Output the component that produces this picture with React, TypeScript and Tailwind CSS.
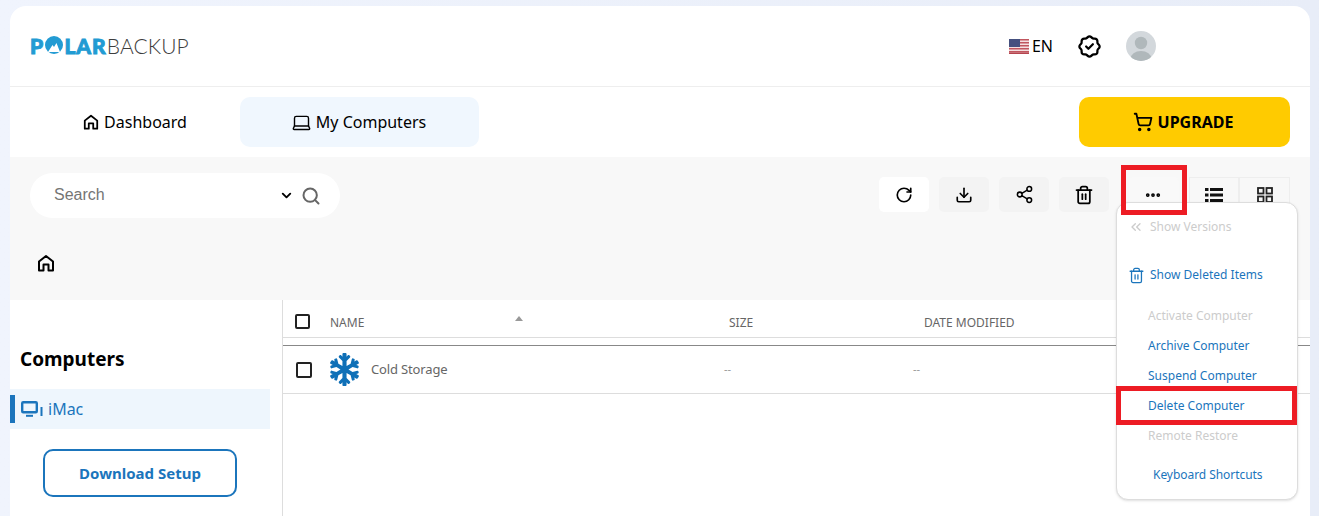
import { ChevronDown, ChevronsLeft, Download, Laptop, MoreHorizontal, RotateCw, Search, Share2, ShoppingCart, Trash2 } from "lucide-react";
import { FaSnowflake } from "react-icons/fa";
import { TbRosetteDiscountCheck } from "react-icons/tb";

function HomeIcon({ className }: { className?: string }) {
  return (
    <svg viewBox="0 0 18 18" className={className} fill="none" stroke="currentColor" strokeWidth="2">
      <path d="M2 16.5V7.5L9 2l7 5.5v9h-4.5v-6h-5v6H2z" strokeLinejoin="round" />
    </svg>
  );
}

function Flag() {
  return (
    <svg viewBox="0 0 20 15" className="w-5 h-[15px]">
      <rect width="20" height="15" fill="#f4dfe0" />
      {[0, 3, 6, 9, 12].map((y) => (
        <rect key={y} y={y} width="20" height="1.5" fill="#c0565f" />
      ))}
      <rect y="13.5" width="20" height="1.5" fill="#b5444e" />
      <rect width="11" height="8" fill="#45507f" />
    </svg>
  );
}

function Avatar() {
  return (
    <svg viewBox="0 0 30 30" className="w-[30px] h-[30px] rounded-full">
      <rect width="30" height="30" fill="#d3d8dc" />
      <circle cx="15" cy="12" r="6.2" fill="#b0b8bb" />
      <ellipse cx="15" cy="28" rx="10.5" ry="8" fill="#b0b8bb" />
    </svg>
  );
}

function Logo() {
  return (
    <div className="flex items-center leading-none font-['Lato',sans-serif] text-[21px] -mt-[2px]">
      <span className="font-black text-[#229bd3] tracking-[1.2px] [-webkit-text-stroke:0.9px_#229bd3]">P</span>
      <svg viewBox="0 0 18 18" className="w-[18px] h-[18px] mx-[1px]">
        <circle cx="9" cy="9" r="9" fill="#229bd3" />
        <path d="M3 16l4.5-7 1.5 2 2.5-4 3.5 9z" fill="#fff" />
      </svg>
      <span className="font-black text-[#229bd3] tracking-[1px] [-webkit-text-stroke:0.9px_#229bd3]">LAR</span>
      <span className="font-light text-[#3d3d3d] tracking-[0.1px]">BACKUP</span>
    </div>
  );
}

function ImacIcon() {
  return (
    <svg viewBox="0 0 22 18" className="w-[22px] h-[18px]" fill="none" stroke="#1b75bc">
      <rect x="1.2" y="2.2" width="14.6" height="10" rx="1" strokeWidth="2.4" />
      <path d="M5 15.8h7" strokeWidth="2" />
      <path d="M20.5 7v9" strokeWidth="2" />
    </svg>
  );
}

function ListIcon() {
  return (
    <svg viewBox="0 0 18 16" className="w-[18px] h-4" fill="#111111">
      <rect y="1" width="3.5" height="3" />
      <rect x="5" y="1" width="13" height="3" />
      <rect y="6.5" width="3.5" height="3" />
      <rect x="5" y="6.5" width="13" height="3" />
      <rect y="12" width="3.5" height="3" />
      <rect x="5" y="12" width="13" height="3" />
    </svg>
  );
}

function GridIcon() {
  return (
    <svg viewBox="0 0 16 16" className="w-4 h-4" fill="none" stroke="#222222" strokeWidth="1.8">
      <rect x="1" y="1" width="5.5" height="5.5" />
      <rect x="9.5" y="1" width="5.5" height="5.5" />
      <rect x="1" y="9.5" width="5.5" height="5.5" />
      <rect x="9.5" y="9.5" width="5.5" height="5.5" />
    </svg>
  );
}

function ToolButton({ children, className }: { children: React.ReactNode; className: string }) {
  return <div className={`w-[50px] h-[35px] rounded-[5px] flex items-center justify-center ${className}`}>{children}</div>;
}

const menuItem = "h-[30px] flex items-center pl-[31px]";

export default function App() {
  return (
    <div className="relative h-[516px] w-[1319px] overflow-hidden bg-gradient-to-r from-[#f0f4fd] to-[#e8edf8] pl-[10px] pt-[6px] font-['Noto_Sans',sans-serif] text-black">
      <div className="w-[1300px] h-[510px] bg-white rounded-t-[16px] flex flex-col">
        {/* top bar */}
        <div className="h-[81px] shrink-0 border-b border-[#eeeeee] flex items-center justify-between pl-[20px] pr-[154px]">
          <Logo />
          <div className="flex items-center">
            <Flag />
            <span className="ml-[3px] text-base">EN</span>
            <TbRosetteDiscountCheck className="ml-[23px] w-[27px] h-[27px]" />
            <div className="ml-[23px]">
              <Avatar />
            </div>
          </div>
        </div>

        {/* tabs */}
        <div className="h-[70px] shrink-0 flex items-center justify-between pl-[20px] pr-[20px]">
          <div className="flex items-center">
            <div className="w-[210px] h-[50px] flex items-center justify-center gap-[5px] text-base">
              <HomeIcon className="w-4 h-4" />
              Dashboard
            </div>
            <div className="w-[239px] h-[50px] rounded-[10px] bg-[#f0f7fe] flex items-center justify-center gap-[4px] pr-[2px] text-base">
              <Laptop className="w-[21px] h-[21px]" strokeWidth={1.6} />
              My Computers
            </div>
          </div>
          <div className="w-[211px] h-[50px] rounded-[10px] bg-[#ffcb00] flex items-center justify-center gap-[5px] pr-[3px] text-base font-bold">
            <ShoppingCart className="w-5 h-5" strokeWidth={2.2} />
            UPGRADE
          </div>
        </div>

        {/* toolbar */}
        <div className="h-[143px] shrink-0 bg-[#f8f8f8] pl-[20px] pr-[20px] pt-[16px]">
          <div className="flex items-start justify-between">
            <div className="w-[310px] h-[45px] rounded-full bg-white flex items-center pl-[24px] pr-[19px] font-['Liberation_Sans',sans-serif] text-base text-[#757575]">
              <span className="flex-1 -mt-[2px]">Search</span>
              <ChevronDown className="w-[15px] h-[15px] text-black mr-[7px]" strokeWidth={3} />
              <Search className="w-5 h-5 text-[#666666]" strokeWidth={2.4} />
            </div>
            <div className="flex items-center mt-[4px]">
              <ToolButton className="bg-white">
                <RotateCw className="w-[18px] h-[18px] -ml-[1px]" strokeWidth={2.2} />
              </ToolButton>
              <ToolButton className="ml-[10px] bg-[#f3f3f3]">
                <Download className="w-[18px] h-[18px]" strokeWidth={2.2} />
              </ToolButton>
              <ToolButton className="ml-[10px] bg-[#f3f3f3]">
                <Share2 className="w-[19px] h-[19px]" strokeWidth={1.9} />
              </ToolButton>
              <ToolButton className="ml-[10px] bg-[#f3f3f3]">
                <Trash2 className="w-[20px] h-[20px] -ml-[1px]" strokeWidth={2.1} />
              </ToolButton>
              <ToolButton className="ml-[20px] bg-[#f9f9f9]">
                <MoreHorizontal className="w-[18px] h-[18px] -ml-[2px]" strokeWidth={3} />
              </ToolButton>
              <ToolButton className="ml-[10px] rounded-none border border-[#eeeeee]">
                <ListIcon />
              </ToolButton>
              <ToolButton className="w-[51px] rounded-none border border-[#eeeeee]">
                <GridIcon />
              </ToolButton>
            </div>
          </div>
          <div className="mt-[36px] pl-[7px]">
            <HomeIcon className="w-[18px] h-[18px]" />
          </div>
        </div>

        {/* main */}
        <div className="flex-1 flex min-h-0">
          <div className="w-[273px] shrink-0 border-r border-[#dddddd] pt-[46px]">
            <div className="pl-[10px] text-[19px] font-bold leading-[26px]">Computers</div>
            <div className="mt-[17px] w-[260px] h-[40px] bg-[#eef6fd] flex items-center relative text-base text-[#1b75bc]">
              <div className="absolute left-0 top-[6px] w-[5px] h-[28px] bg-[#1b75bc]" />
              <div className="ml-[11px]">
                <ImacIcon />
              </div>
              <span className="ml-[5px]">iMac</span>
            </div>
            <div className="mt-[20px] ml-[33px] w-[194px] h-[48px] rounded-[10px] border-2 border-[#1b75bc] flex items-center justify-center text-[15px] font-bold text-[#1b75bc]">
              Download Setup
            </div>
          </div>

          <div className="flex-1 min-w-0">
            <div className="h-[38px] border-b border-[#dddddd] flex items-start text-[12px] text-[#666666] relative">
              <div className="ml-[12px] mt-[14px] w-[15px] h-[15px] rounded-[2px] border-2 border-[#222222]" />
              <span className="ml-[20px] mt-[14px] w-[185px]">NAME</span>
              <svg viewBox="0 0 8 5" className="w-2 h-[5px] mt-[16px]" fill="#999999">
                <path d="M4 0l4 5H0z" />
              </svg>
              <span className="ml-[206px] mt-[14px] w-[195px]">SIZE</span>
              <span className="mt-[14px]">DATE MODIFIED</span>
            </div>
            <div className="h-[8px] border-b border-[#888888]" />
            <div className="h-[48px] border-b border-[#dddddd] flex items-center relative">
              <div className="ml-[13px] w-[16px] h-[16px] rounded-[2px] border-2 border-[#222222]" />
              <FaSnowflake className="ml-[16px] w-[33px] h-[33px] text-[#0f70b7]" />
              <span className="ml-[10px] w-[353px] text-[13px] text-[#666666] tracking-[-0.15px]">Cold Storage</span>
              <span className="w-[189px] text-[11px] text-[#999999]">--</span>
              <span className="text-[11px] text-[#999999]">--</span>
            </div>
          </div>
        </div>
      </div>

      {/* more actions menu */}
      <div className="absolute left-[1116px] top-[202px] w-[182px] h-[298px] bg-white rounded-[12px] border border-[#dddddd] shadow-sm text-[12px] text-[#1b75bc] pt-[9px]">
        <div className="h-[30px] flex items-center pl-[11px] text-[#cccccc]">
          <ChevronsLeft className="w-[16px] h-[16px]" />
          <span className="ml-[6px]">Show Versions</span>
        </div>
        <div className="mt-[18px] h-[30px] flex items-center pl-[11px]">
          <Trash2 className="w-[17px] h-[17px]" strokeWidth={1.8} />
          <span className="ml-[5px]">Show Deleted Items</span>
        </div>
        <div className={`mt-[11px] ${menuItem} text-[#cccccc]`}>Activate Computer</div>
        <div className={menuItem}>Archive Computer</div>
        <div className={menuItem}>Suspend Computer</div>
        <div className={menuItem}>Delete Computer</div>
        <div className={`${menuItem} text-[#cccccc]`}>Remote Restore</div>
        <div className={`mt-[9px] ${menuItem} pl-[36px] tracking-[-0.05px]`}>Keyboard Shortcuts</div>
      </div>

      {/* annotation boxes */}
      <div className="absolute left-[1121px] top-[165px] w-[66px] h-[50px] border-[5px] border-[#ed1c24]" />
      <div className="absolute left-[1116px] top-[386px] w-[181px] h-[39px] border-[5px] border-[#ed1c24]" />
    </div>
  );
}
